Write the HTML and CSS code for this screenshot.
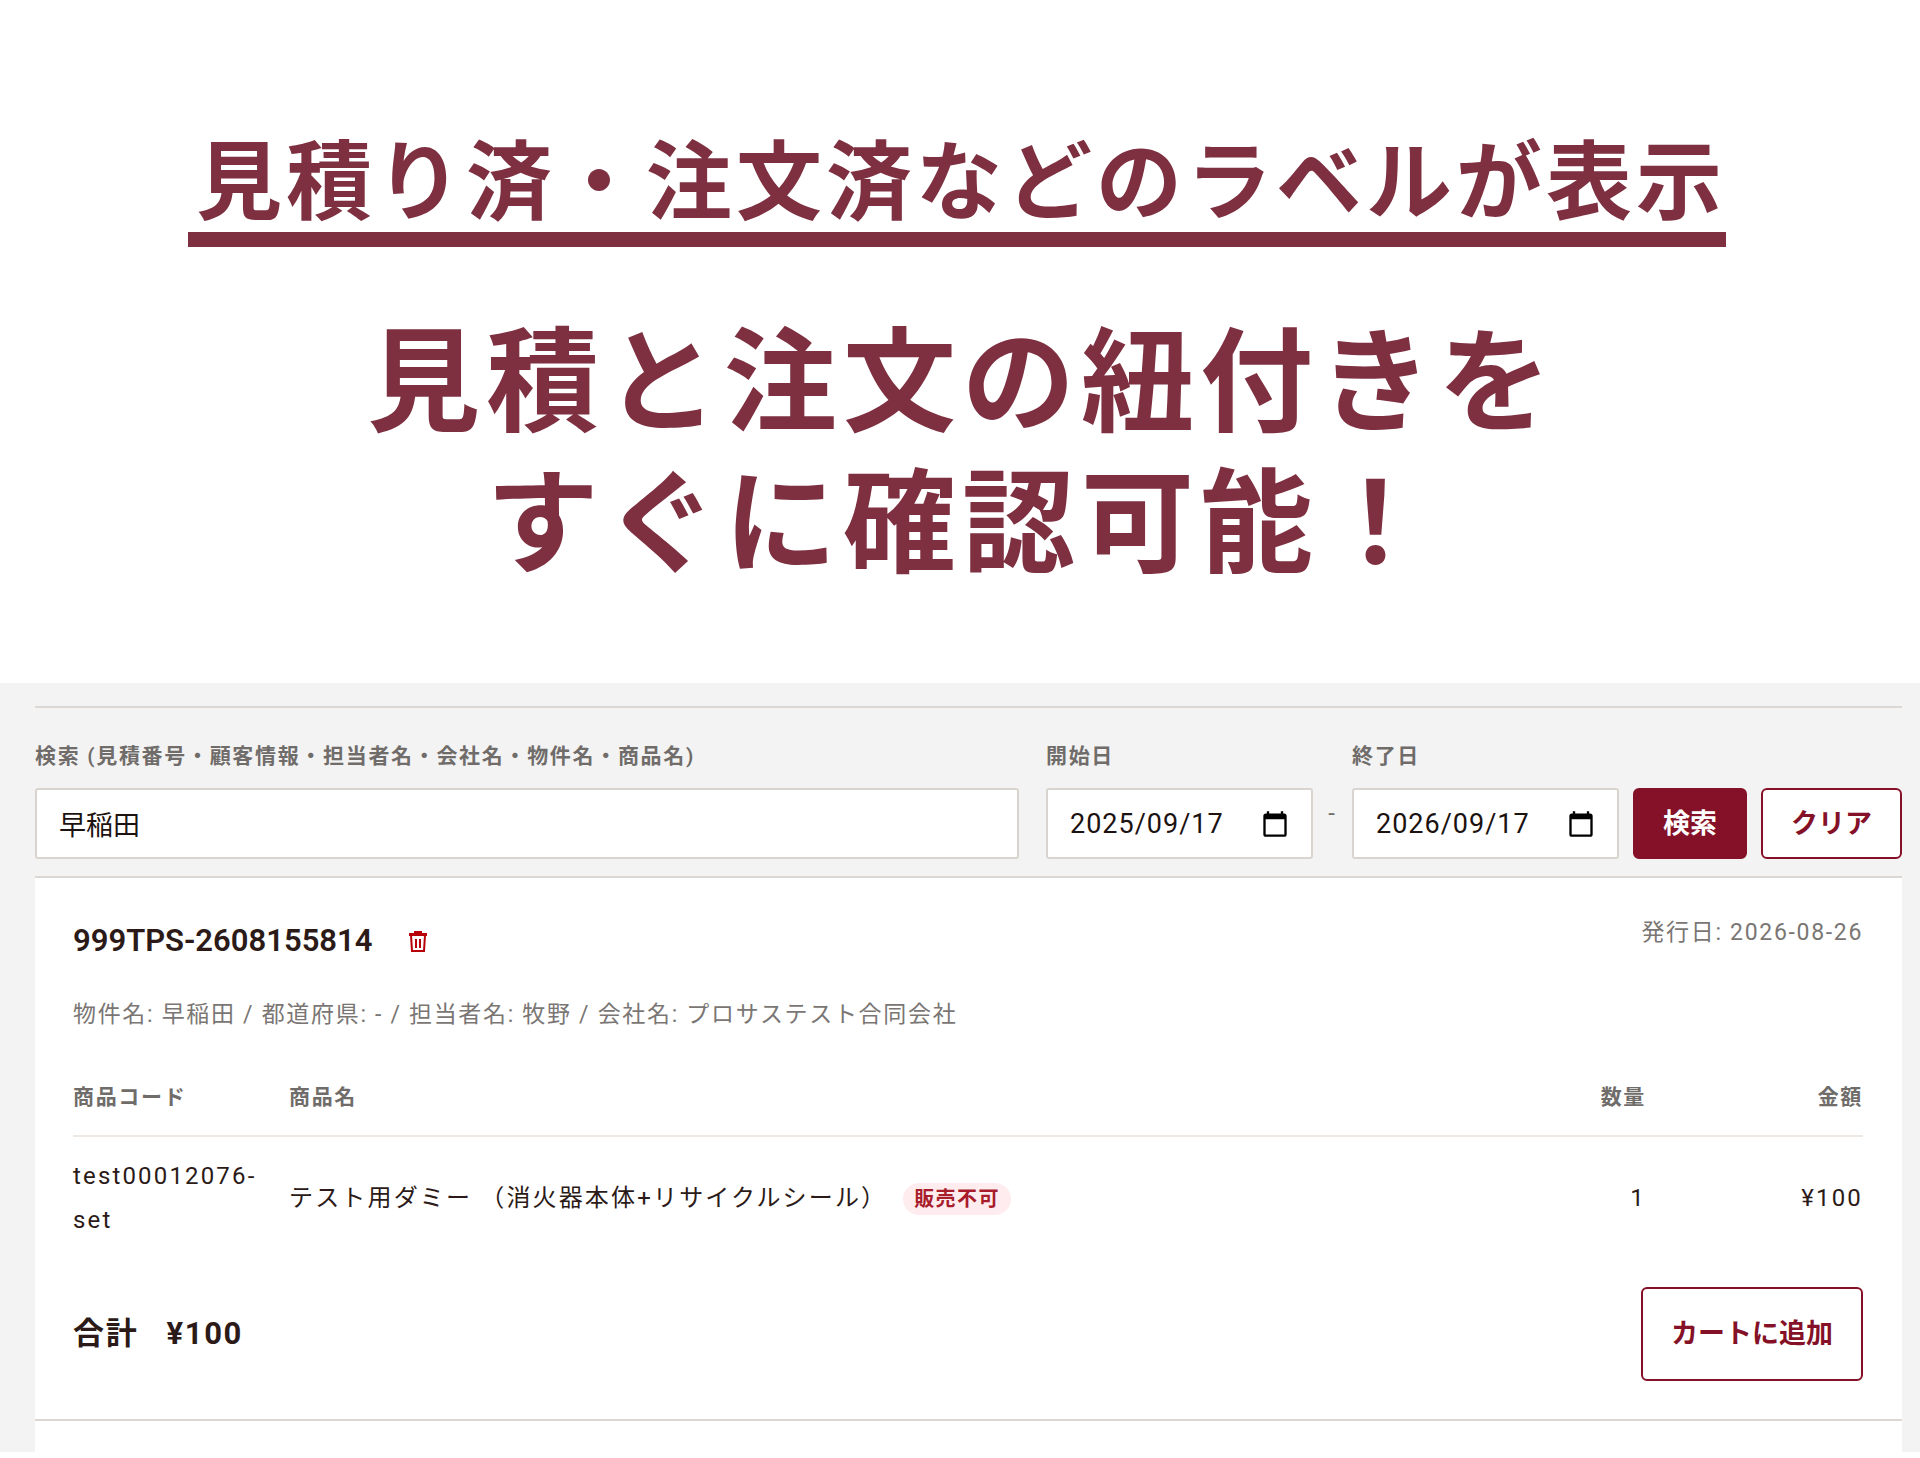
FILE: index.html
```html
<!DOCTYPE html>
<html lang="ja">

<head>
  <meta charset="utf-8">
  <title>見積履歴</title>
  <link rel="stylesheet" href="styles.css">
</head>

<body>
  <header class="hero">
    <h1 class="hero-title">見積り済・注文済などのラベルが表示</h1>
    <p class="hero-lead">見積と注文の紐付きを<br>すぐに確認可能！</p>
  </header>

  <main class="panel">
    <form class="search">
      <div class="field field-wide">
        <label for="keyword">検索 (見積番号・顧客情報・担当者名・会社名・物件名・商品名)</label>
        <input class="box" id="keyword" type="text" value="早稲田">
      </div>
      <div class="field">
        <label for="from">開始日</label>
        <div class="box date">
          <input id="from" type="text" value="2025/09/17">
          <svg viewBox="0 0 24 24" aria-hidden="true"><path d="M20 3h-1V1h-2v2H7V1H5v2H4c-1.1 0-2 .9-2 2v16c0 1.1.9 2 2 2h16c1.1 0 2-.9 2-2V5c0-1.1-.9-2-2-2zm0 18H4V8h16v13z"/></svg>
        </div>
      </div>
      <span class="dash">-</span>
      <div class="field">
        <label for="to">終了日</label>
        <div class="box date">
          <input id="to" type="text" value="2026/09/17">
          <svg viewBox="0 0 24 24" aria-hidden="true"><path d="M20 3h-1V1h-2v2H7V1H5v2H4c-1.1 0-2 .9-2 2v16c0 1.1.9 2 2 2h16c1.1 0 2-.9 2-2V5c0-1.1-.9-2-2-2zm0 18H4V8h16v13z"/></svg>
        </div>
      </div>
      <div class="actions">
        <button class="btn btn-primary" type="submit">検索</button>
        <button class="btn" type="reset">クリア</button>
      </div>
    </form>

    <article class="card">
      <div class="card-head">
        <h2>999TPS-2608155814</h2>
        <button class="delete" type="button" aria-label="削除">
          <svg viewBox="0 0 20 22" aria-hidden="true">
            <path d="M6 0h8v2h5v3H1V2h5z"/>
            <path d="M3 4l1 16h12l1-16M8 8v9M12 8v9" fill="none" stroke="currentColor" stroke-width="2"/>
          </svg>
        </button>
        <span class="issued">発行日: 2026-08-26</span>
      </div>
      <p class="meta">物件名: 早稲田 / 都道府県: - / 担当者名: 牧野 / 会社名: プロサステスト合同会社</p>
      <table class="items">
        <thead>
          <tr>
            <th class="code">商品コード</th>
            <th>商品名</th>
            <th class="num">数量</th>
            <th class="num">金額</th>
          </tr>
        </thead>
        <tbody>
          <tr>
            <td class="code">test00012076-set</td>
            <td>テスト用ダミー （消火器本体+リサイクルシール）<span class="badge">販売不可</span></td>
            <td class="num">1</td>
            <td class="num">¥100</td>
          </tr>
        </tbody>
      </table>
      <div class="card-foot">
        <p class="total"><span>合計</span><span>¥100</span></p>
        <button class="btn btn-cart" type="button">カートに追加</button>
      </div>
    </article>
    <article class="card card-next"></article>
  </main>
</body>

</html>
```

FILE: styles.css
```css
* {
  box-sizing: border-box;
}

body {
  margin: 0;
  background: #fff;
  color: #2b1a17;
  font-family: Roboto, 'Noto Sans CJK JP', sans-serif;
  font-size: 24px;
  line-height: 44px;
  letter-spacing: 0.07em;
}

h1,
h2,
p {
  margin: 0;
}

.hero {
  padding: 124px 6px 98px 0;
  text-align: center;
  color: #7e3041;
  font-family: 'Noto Sans CJK JP', sans-serif;
  font-weight: 700;
}

.hero-title {
  display: inline-block;
  padding: 0 0 4px 8px;
  border-bottom: 15px solid #7e3041;
  font-size: 86px;
  line-height: 104px;
  letter-spacing: 4px;
  vertical-align: top;
}

.hero-lead {
  margin-top: 56px;
  padding-left: 10px;
  font-size: 113px;
  line-height: 141px;
  letter-spacing: 6px;
}

.panel {
  padding: 23px 18px 0 35px;
  background: #f3f3f3;
}

/* search form */
.search {
  display: flex;
  align-items: flex-end;
  padding: 30px 0 17px;
  border-top: 2px solid #dcd7d2;
}

.field {
  display: flex;
  flex-direction: column;
  gap: 14px;
}

.field-wide {
  flex: 1;
  margin-right: 27px;
}

.field label {
  color: #706c6a;
  font-size: 21px;
  font-weight: 600;
  line-height: 36px;
}

.box {
  width: 100%;
  height: 71px;
  padding: 0 22px;
  border: 2px solid #dad4cf;
  border-radius: 3px;
  background: #fff;
  color: #1c1210;
  font-family: inherit;
  font-size: 27px;
}

.date {
  display: flex;
  align-items: center;
  justify-content: space-between;
  width: 267px;
}

.date input {
  width: 170px;
  padding: 0;
  border: 0;
  background: none;
  color: inherit;
  font: inherit;
  letter-spacing: 1px;
}

.date svg {
  width: 28px;
  height: 28px;
}

.dash {
  width: 39px;
  padding-bottom: 24px;
  color: #706c6a;
  text-align: center;
}

.actions {
  display: flex;
  gap: 14px;
  margin-left: 14px;
}

.btn {
  height: 71px;
  padding: 0 28px 5px;
  border: 2px solid #841127;
  border-radius: 6px;
  background: #fff;
  color: #841127;
  font-family: inherit;
  font-size: 27px;
  font-weight: 700;
}

.btn-primary {
  background: #841127;
  color: #fff;
}

.btn-cart {
  height: 94px;
}

/* estimate card */
.card {
  padding: 37px 39px 38px 38px;
  border-top: 2px solid #dcd7d2;
  background: #fff;
}

.card-head {
  display: flex;
  align-items: flex-start;
}

.card-head h2 {
  padding-top: 4px;
  font-size: 31px;
  font-weight: 600;
  letter-spacing: 0;
}

.delete {
  display: flex;
  margin: 16px 0 0 36px;
  padding: 0;
  border: 0;
  background: none;
  color: #b80008;
}

.delete svg {
  width: 20px;
  height: 22px;
  fill: currentColor;
}

.issued {
  margin-left: auto;
  color: #7a7674;
  font-size: 23px;
  line-height: 36px;
}

.meta {
  margin: 34px 0 46px;
  color: #7a7674;
  font-size: 23px;
  line-height: 36px;
}

.items {
  width: 100%;
  border-collapse: collapse;
}

.items th {
  padding: 0 0 20px;
  border-bottom: 2px solid #eee9e5;
  color: #706c6a;
  font-size: 21px;
  font-weight: 600;
  line-height: 36px;
  text-align: left;
}

.items td {
  padding: 17px 0;
  letter-spacing: 0.09em;
}

.items .code {
  width: 216px;
  padding-right: 30px;
}

.items .num {
  width: 217px;
  text-align: right;
}

.badge {
  display: inline-block;
  margin-left: 16px;
  padding: 0 11px;
  border-radius: 16px;
  background: #ffecee;
  color: #a81c2c;
  font-size: 20px;
  font-weight: 700;
  line-height: 32px;
  letter-spacing: 0.07em;
}

.card-foot {
  display: flex;
  align-items: center;
  justify-content: space-between;
  margin-top: 28px;
}

.total {
  display: flex;
  gap: 28px;
  font-size: 31px;
  font-weight: 700;
}

.card-next {
  padding: 0;
  min-height: 33px;
}
```
